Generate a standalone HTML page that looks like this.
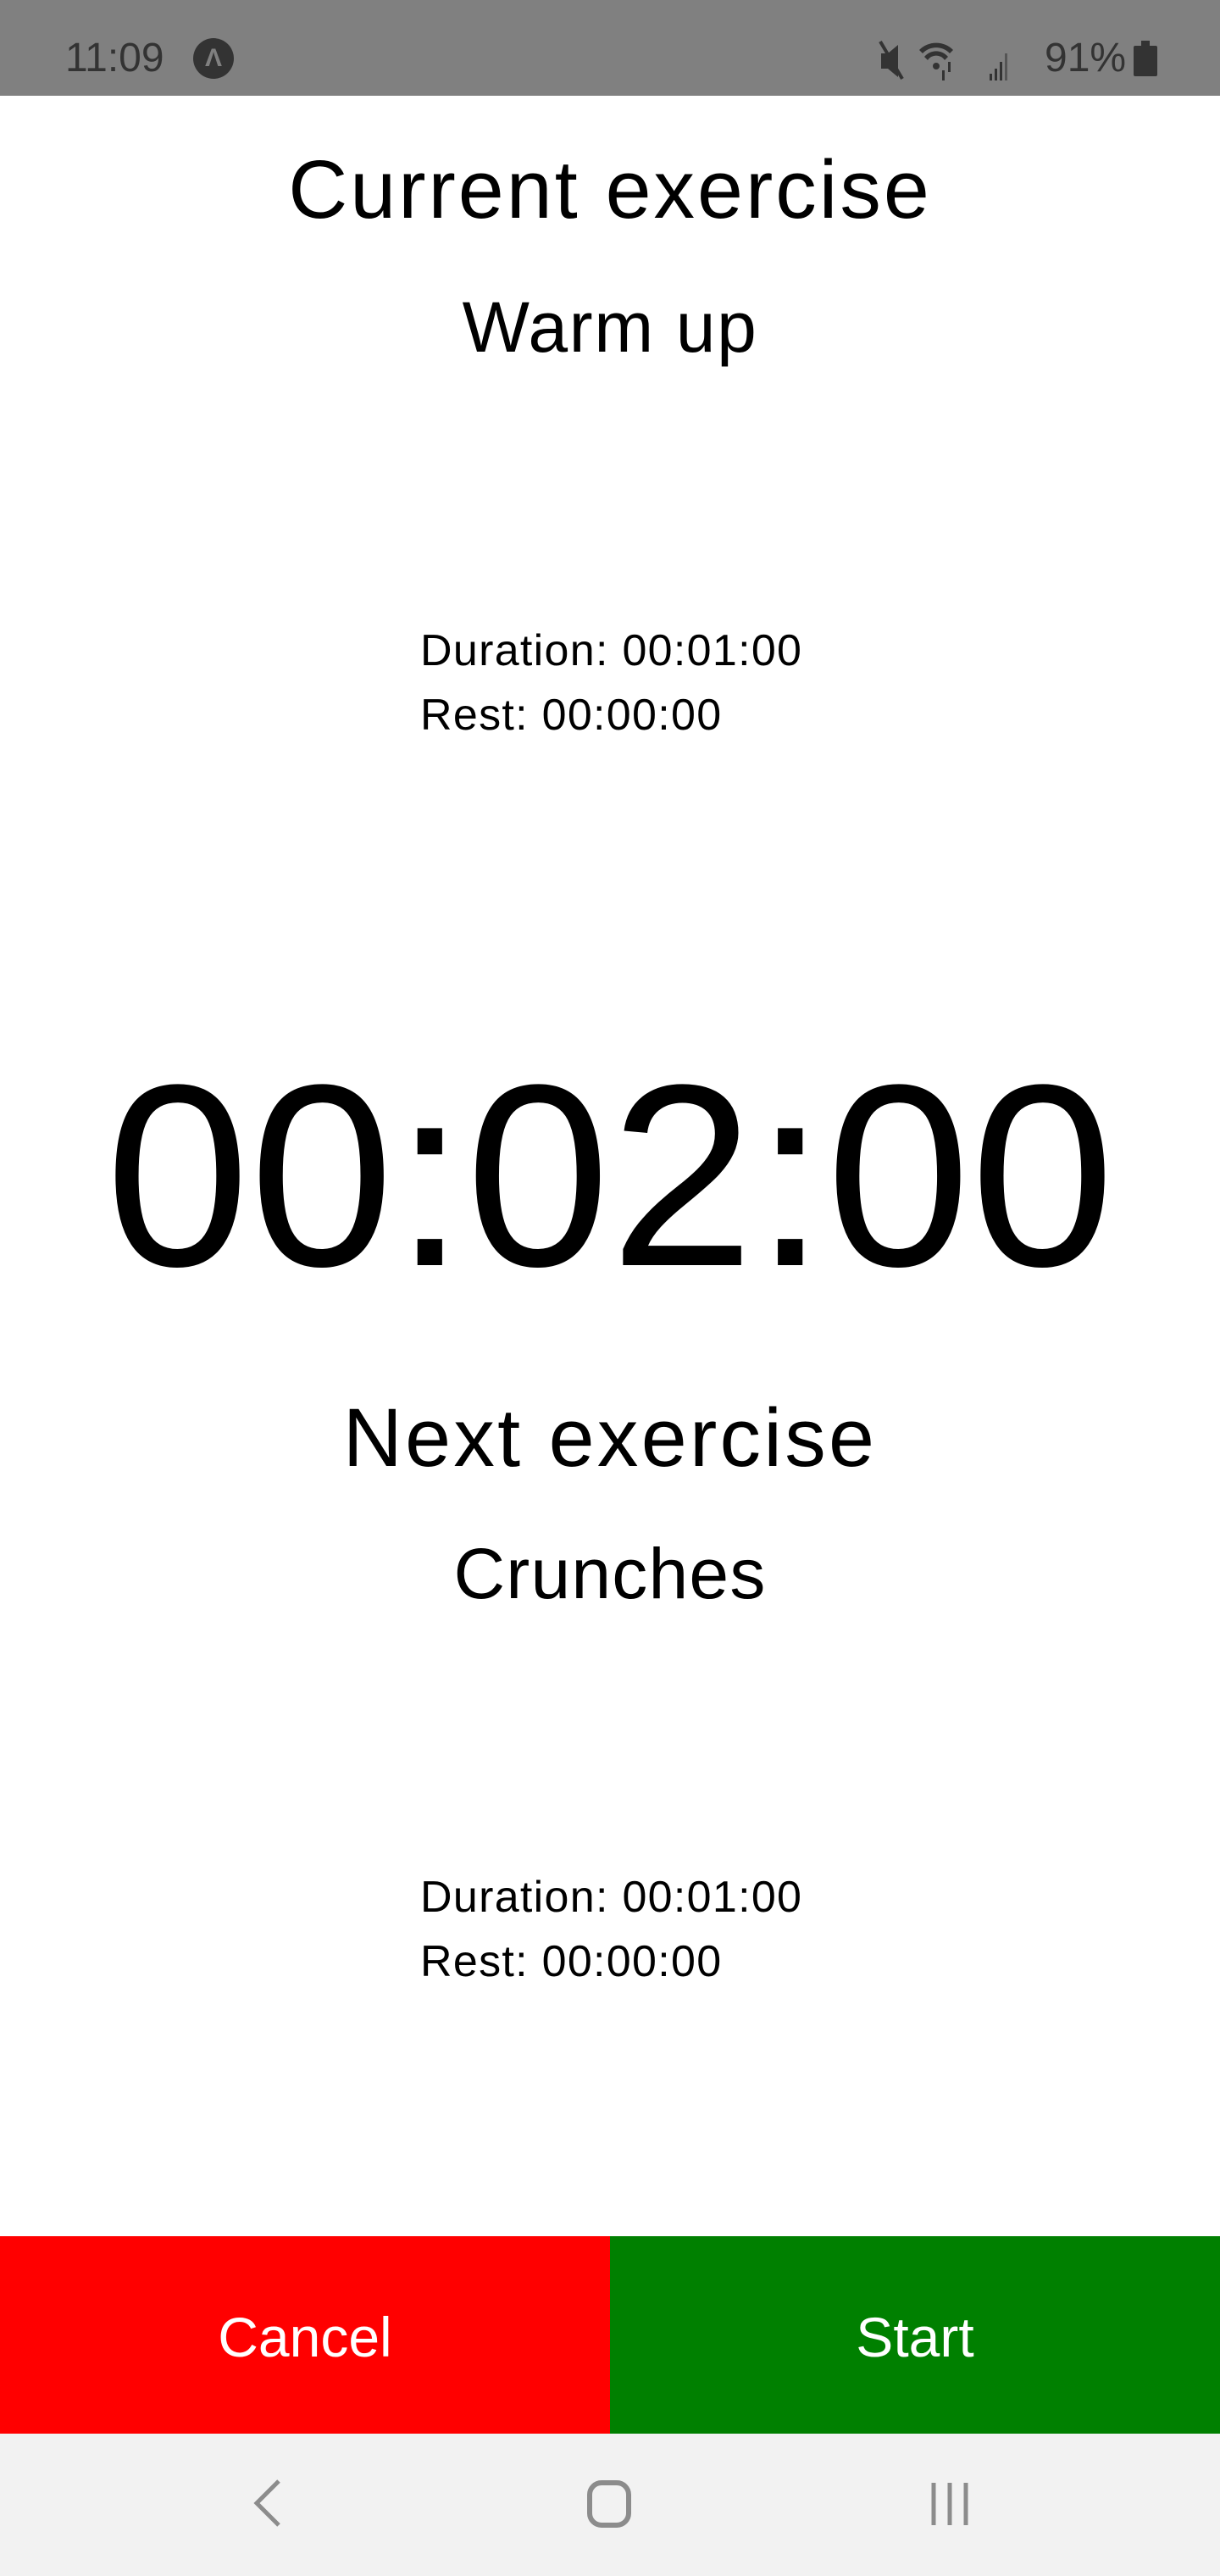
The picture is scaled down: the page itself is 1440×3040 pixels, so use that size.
<!DOCTYPE html>
<html><head><meta charset="utf-8"><style>
html,body{margin:0;padding:0}
body{width:1440px;height:3040px;position:relative;background:#fff;font-family:"Liberation Sans",Arial,sans-serif;overflow:hidden;color:#000}
.t{position:absolute;left:0;width:1440px;text-align:center;line-height:1;white-space:nowrap}
.l{position:absolute;left:496px;line-height:1;white-space:nowrap;font-size:52px;letter-spacing:1.3px}
</style></head><body>
<div style="position:absolute;left:0;top:0;width:1440px;height:113px;background:#808080"></div>
<div style="position:absolute;left:77px;top:45px;font-size:48px;line-height:1;color:#333">11:09</div>
<div style="position:absolute;left:228px;top:45px;width:48px;height:48px;border-radius:50%;background:#333;color:#808080;font-size:30px;text-align:center;line-height:48px;font-weight:bold">&#923;</div>
<svg style="position:absolute;left:1035px;top:45px" width="340" height="55" viewBox="0 0 340 55">
<g fill="#333">
<path d="M5 18h8l12-10v38l-12-10H5z"/><path d="M4 4l26 44" stroke="#333" stroke-width="4"/>
<path d="M50 14a28 28 0 0 1 40 0l-4 4a22 22 0 0 0-32 0z"/><path d="M56 22a18 18 0 0 1 28 0l-4 4a12 12 0 0 0-20 0z"/><circle cx="70" cy="33" r="4"/>
<path d="M77 38h3v12h-3z"/><path d="M84 28h3v12h-3z"/>
<rect x="133" y="42" width="3" height="8"/><rect x="139" y="36" width="3" height="14"/><rect x="145" y="28" width="3" height="22"/><rect x="151" y="18" width="3" height="32" fill="#555"/>
</g></svg>
<div style="position:absolute;left:1233px;top:45px;font-size:48px;line-height:1;color:#333">91%</div>
<div style="position:absolute;left:1338px;top:54px;width:28px;height:36px;background:#333;border-radius:2px"></div>
<div style="position:absolute;left:1347px;top:48px;width:10px;height:7px;background:#333"></div>

<div class="t" style="top:175px;font-size:97px;letter-spacing:3px">Current exercise</div>
<div class="t" style="top:344px;font-size:84px;letter-spacing:1.6px">Warm up</div>
<div class="l" style="top:742px">Duration: 00:01:00</div>
<div class="l" style="top:818px">Rest: 00:00:00</div>
<div class="t" style="top:1234px;font-size:306px">00:02:00</div>
<div class="t" style="top:1648px;font-size:97px;letter-spacing:3.3px">Next exercise</div>
<div class="t" style="top:1815px;font-size:84px;letter-spacing:1.2px">Crunches</div>
<div class="l" style="top:2213px">Duration: 00:01:00</div>
<div class="l" style="top:2289px">Rest: 00:00:00</div>

<div style="position:absolute;left:0;top:2639px;width:720px;height:233px;background:#ff0000"></div>
<div style="position:absolute;left:720px;top:2639px;width:720px;height:233px;background:#008000"></div>
<div style="position:absolute;left:0;top:2725px;width:720px;text-align:center;font-size:66px;line-height:1;color:#fff">Cancel</div>
<div style="position:absolute;left:720px;top:2725px;width:720px;text-align:center;font-size:66px;line-height:1;color:#fff">Start</div>

<div style="position:absolute;left:0;top:2872px;width:1440px;height:168px;background:#f2f2f2"></div>
<svg style="position:absolute;left:0;top:2920px" width="1440" height="70">
<path d="M329 8L303 34l26 26" fill="none" stroke="#8c8c8c" stroke-width="5"/>
<rect x="696" y="10" width="46" height="50" rx="14" fill="none" stroke="#8c8c8c" stroke-width="6"/>
<path d="M1102 10v50M1121 10v50M1140 10v50" stroke="#8c8c8c" stroke-width="5"/>
</svg>
</body></html>
